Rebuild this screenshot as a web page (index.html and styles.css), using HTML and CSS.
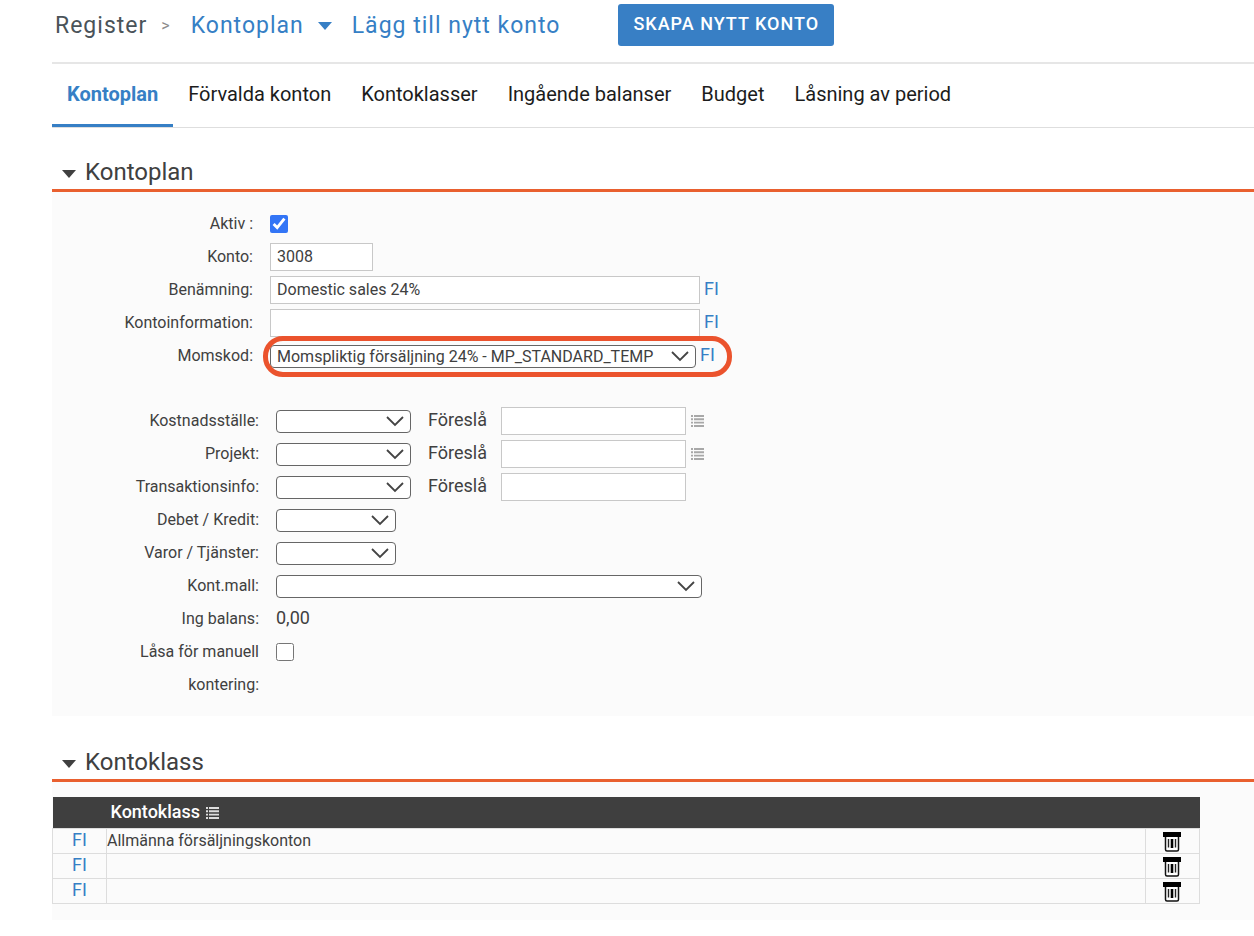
FILE: index.html
```
<!DOCTYPE html>
<html lang="sv">
<head>
<meta charset="utf-8">
<title>Kontoplan</title>
<link rel="stylesheet" href="styles.css">
</head>
<body>
<svg class="sprite" aria-hidden="true">
  <symbol id="chevron" viewBox="0 0 18 11"><path d="M1 1l8 8 8-8" fill="none" stroke="#444" stroke-width="1.8"/></symbol>
  <symbol id="caret" viewBox="0 0 14 8"><path d="M0 0h14L7 8z" fill="currentColor"/></symbol>
  <symbol id="list" viewBox="0 0 13 12"><path d="M0 1h2M0 4.300h2M0 7.600h2M0 11h2M3 1h10M3 4.300h10M3 7.600h10M3 11h10" fill="none" stroke="currentColor" stroke-width="1.900"/></symbol>
  <symbol id="trash" viewBox="0 0 18 20"><path d="M0 0h18v5H0z"/><path d="M2.500 5v12.500q0 1.500 1.500 1.500h10q1.500 0 1.500-1.500V5" fill="#fff" stroke="#111" stroke-width="1.500"/><path d="M5.500 7v8.500M12.500 7v8.500" stroke="#222" stroke-width="1.400"/><path d="M9 7v9" stroke="#000" stroke-width="2.600"/></symbol>
</svg>
<main class="page">
  <header class="topbar">
    <nav class="crumbs" aria-label="Sökväg">
      <span class="crumb-root">Register</span>
      <span class="crumb-sep">&gt;</span>
      <a class="crumb" href="#">Kontoplan <svg class="caret"><use href="#caret"/></svg></a>
      <a class="crumb" href="#">Lägg till nytt konto</a>
    </nav>
    <button class="primary" type="button">SKAPA NYTT KONTO</button>
  </header>
  <nav class="tabs" aria-label="Flikar">
    <a class="tab active" href="#">Kontoplan</a>
    <a class="tab" href="#">Förvalda konton</a>
    <a class="tab" href="#">Kontoklasser</a>
    <a class="tab" href="#">Ingående balanser</a>
    <a class="tab" href="#">Budget</a>
    <a class="tab" href="#">Låsning av period</a>
  </nav>

  <section class="section">
    <h2 class="title"><svg class="caret"><use href="#caret"/></svg>Kontoplan</h2>
    <form class="panel form">
      <div class="group">
        <div class="row"><label class="label" for="aktiv">Aktiv :</label><div class="field"><input class="check" id="aktiv" type="checkbox" checked></div></div>
        <div class="row"><label class="label" for="konto">Konto:</label><div class="field"><input class="text short" id="konto" type="text" value="3008"></div></div>
        <div class="row"><label class="label" for="namn">Benämning:</label><div class="field"><input class="text long" id="namn" type="text" value="Domestic sales 24%"><a class="lang" href="#">FI</a></div></div>
        <div class="row"><label class="label" for="info">Kontoinformation:</label><div class="field"><input class="text long" id="info" type="text"><a class="lang" href="#">FI</a></div></div>
        <div class="row"><label class="label" for="moms">Momskod:</label><div class="field marked"><span class="select wide"><select id="moms"><option>Momspliktig försäljning 24% - MP_STANDARD_TEMP</option></select><svg class="chevron"><use href="#chevron"/></svg></span><a class="lang" href="#">FI</a></div></div>
      </div>
      <div class="group inset">
        <div class="row"><label class="label" for="kst">Kostnadsställe:</label><div class="field"><span class="select medium"><select id="kst"><option></option></select><svg class="chevron"><use href="#chevron"/></svg></span><label class="suggest" for="kst2">Föreslå</label><input class="text mid" id="kst2" type="text"><svg class="list"><use href="#list"/></svg></div></div>
        <div class="row"><label class="label" for="proj">Projekt:</label><div class="field"><span class="select medium"><select id="proj"><option></option></select><svg class="chevron"><use href="#chevron"/></svg></span><label class="suggest" for="proj2">Föreslå</label><input class="text mid" id="proj2" type="text"><svg class="list"><use href="#list"/></svg></div></div>
        <div class="row"><label class="label" for="trans">Transaktionsinfo:</label><div class="field"><span class="select medium"><select id="trans"><option></option></select><svg class="chevron"><use href="#chevron"/></svg></span><label class="suggest" for="trans2">Föreslå</label><input class="text mid" id="trans2" type="text"></div></div>
        <div class="row"><label class="label" for="dk">Debet / Kredit:</label><div class="field"><span class="select small"><select id="dk"><option></option></select><svg class="chevron"><use href="#chevron"/></svg></span></div></div>
        <div class="row"><label class="label" for="vt">Varor / Tjänster:</label><div class="field"><span class="select small"><select id="vt"><option></option></select><svg class="chevron"><use href="#chevron"/></svg></span></div></div>
        <div class="row"><label class="label" for="mall">Kont.mall:</label><div class="field"><span class="select wide"><select id="mall"><option></option></select><svg class="chevron"><use href="#chevron"/></svg></span></div></div>
        <div class="row"><span class="label">Ing balans:</span><div class="field"><span class="value">0,00</span></div></div>
        <div class="row"><label class="label" for="las">Låsa för manuell kontering:</label><div class="field"><input class="check" id="las" type="checkbox"></div></div>
      </div>
    </form>
  </section>

  <section class="section">
    <h2 class="title"><svg class="caret"><use href="#caret"/></svg>Kontoklass</h2>
    <div class="panel table-panel">
      <table class="table">
        <thead><tr><th class="col-lang"></th><th class="col-name">Kontoklass <svg class="list"><use href="#list"/></svg></th><th class="col-delete"></th></tr></thead>
        <tbody>
          <tr><td class="cell-lang"><a href="#">FI</a></td><td>Allmänna försäljningskonton</td><td class="cell-delete"><button class="delete" type="button" aria-label="Ta bort"><svg class="trash"><use href="#trash"/></svg></button></td></tr>
          <tr><td class="cell-lang"><a href="#">FI</a></td><td></td><td class="cell-delete"><button class="delete" type="button" aria-label="Ta bort"><svg class="trash"><use href="#trash"/></svg></button></td></tr>
          <tr><td class="cell-lang"><a href="#">FI</a></td><td></td><td class="cell-delete"><button class="delete" type="button" aria-label="Ta bort"><svg class="trash"><use href="#trash"/></svg></button></td></tr>
        </tbody>
      </table>
    </div>
  </section>
</main>
</body>
</html>
```
FILE: styles.css
```
* { box-sizing: border-box; }
body { margin: 0; background: #fff; color: #404040; font: 16px/20px Roboto, "Liberation Sans", sans-serif; }
a { color: #367fc5; text-decoration: none; }
svg { flex: none; display: block; }
input, select, button { font: inherit; color: inherit; }
.sprite { display: none; }
.page { padding-left: 52px; }

.topbar { display: flex; align-items: flex-start; gap: 58px; height: 64px; padding: 4px 0 0 3px; border-bottom: 2px solid #e6e6e6; }
.crumbs { display: flex; align-items: center; font-size: 23px; line-height: 44px; letter-spacing: 1px; white-space: nowrap; }
.crumb-root { color: #4a5359; }
.crumb-sep { padding: 0 20px 0 14px; font-size: 16px; color: #8c8c8c; }
.crumb { display: flex; align-items: center; gap: 14px; }
.crumb + .crumb { margin-left: 20px; }
.caret { width: 14px; height: 8px; }
.primary { height: 42px; padding: 0 15px 2px; border: 0; border-radius: 3px; background: #387fc5; color: #fff; font-size: 18px; font-weight: 500; letter-spacing: 1px; white-space: nowrap; }

.tabs { display: flex; height: 64px; border-bottom: 1px solid #dedede; font-size: 20px; line-height: 60px; }
.tab { height: 63px; padding: 0 15px; color: #1c1c1c; white-space: nowrap; }
.tab.active { color: #367fc5; font-weight: 700; border-bottom: 3px solid #367fc5; }

.section { padding-top: 28px; }
.section + .section { padding-top: 30px; }
.title { display: flex; align-items: center; gap: 9px; height: 36px; margin: 0; padding: 0 0 1px 10px; border-bottom: 3px solid #e9602f; font-size: 24px; line-height: 32px; font-weight: 400; }
.title .caret { margin-top: 3px; }
.panel { background: #fbfbfb; padding: 15px 0; }

.group.inset { padding-top: 32px; }
.row { display: flex; gap: 17px; }
.label { width: 201px; padding-left: 20px; text-align: right; line-height: 33px; flex: none; }
.inset .label { width: 207px; }
.field { display: flex; align-items: center; height: 33px; }
.check { width: 18px; height: 18px; margin: 0; accent-color: #3375f6; }
.text { height: 28px; padding: 0 6px; border: 1px solid #c8c8c8; border-radius: 0; background: #fff; }
.short { width: 103px; }
.mid { width: 185px; }
.long { width: 430px; }
.lang, .suggest, .value { padding-bottom: 2px; font-size: 18px; }
.lang { padding-left: 4px; }
.select { display: grid; align-items: center; height: 23px; margin-top: 2px; }
.select select { grid-area: 1 / 1; width: 100%; height: 23px; padding: 0 30px 0 6px; appearance: none; border: 1px solid #666; border-radius: 4px; background: #fff; }
.chevron { grid-area: 1 / 1; z-index: 1; justify-self: end; width: 18px; height: 11px; margin-right: 7px; pointer-events: none; }
.small { width: 120px; }
.medium { width: 135px; }
.wide { width: 426px; }
.suggest { padding-left: 17px; padding-right: 14px; }
.list { width: 13px; height: 12px; color: #a8a8a8; }
.field .list { margin-left: 5px; }
.marked { position: relative; }
.marked::after { content: ""; position: absolute; inset: -3px -17px -5px -7px; border: 5px solid #eb532d; border-radius: 20px; pointer-events: none; }

.table-panel { padding-right: 54px; padding-bottom: 16px; }
.table { width: 100%; border-collapse: collapse; table-layout: fixed; }
.table th { height: 31px; padding: 0 4px; background: #3f3f3f; color: #fff; font-size: 18px; font-weight: 500; text-align: left; }
.table th .list { display: inline-block; margin-left: 1px; color: #ddd; vertical-align: -1px; }
.table td { height: 25px; padding: 0; border: 1px solid #ddd; }
.table .cell-lang { padding-bottom: 2px; text-align: center; font-size: 18px; }
.col-lang, .col-delete { width: 54px; }
.delete { display: block; margin: 0 auto; padding: 2px 2px 0 0; border: 0; background: none; }
.trash { width: 18px; height: 20px; }
```
